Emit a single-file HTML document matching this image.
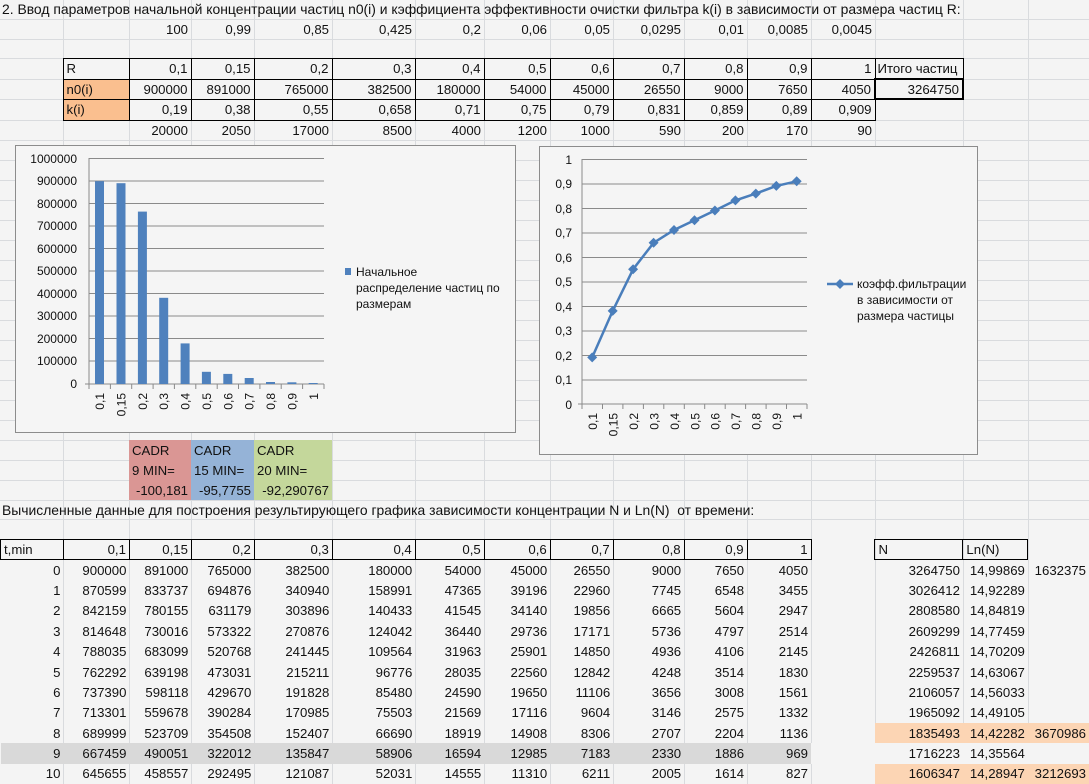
<!DOCTYPE html>
<html><head><meta charset="utf-8"><style>
*{margin:0;padding:0;box-sizing:border-box}
body{width:1089px;height:784px;overflow:hidden;background:#f4f4f4;position:relative;font-family:"Liberation Sans",sans-serif;font-size:13.2px;color:#111}
.v{position:absolute;top:0;width:1px;height:784px;background:#d9dbde}
.h{position:absolute;left:0;width:1089px;height:1px;background:#d9dbde}
table{position:absolute;left:0;border-collapse:collapse;table-layout:fixed}
td{padding:0 3px;text-align:right;white-space:nowrap;overflow:visible;font-size:13.2px}
td.l{text-align:left}
.b{border:1px solid #000}
.B{border:2px solid #000}
.o{background:#fabf8f}
.p{background:#fcd5b4}
.g{background:#d9d9d9}
.t{position:absolute;left:2px;white-space:nowrap;font-size:13.2px}
</style></head><body>
<div class="v" style="left:63px"></div><div class="v" style="left:129px"></div><div class="v" style="left:191px"></div><div class="v" style="left:254px"></div><div class="v" style="left:332px"></div><div class="v" style="left:415px"></div><div class="v" style="left:484px"></div><div class="v" style="left:550px"></div><div class="v" style="left:613px"></div><div class="v" style="left:684px"></div><div class="v" style="left:747px"></div><div class="v" style="left:811px"></div><div class="v" style="left:875px"></div><div class="v" style="left:963px"></div><div class="v" style="left:1028px"></div>
<div class="h" style="top:19px"></div><div class="h" style="top:39px"></div><div class="h" style="top:58px"></div><div class="h" style="top:79px"></div><div class="h" style="top:99px"></div><div class="h" style="top:120px"></div><div class="h" style="top:140px"></div>
<div class="h" style="top:160px"></div><div class="h" style="top:180px"></div><div class="h" style="top:200px"></div><div class="h" style="top:220px"></div><div class="h" style="top:240px"></div><div class="h" style="top:260px"></div><div class="h" style="top:280px"></div><div class="h" style="top:300px"></div><div class="h" style="top:320px"></div><div class="h" style="top:340px"></div><div class="h" style="top:360px"></div><div class="h" style="top:380px"></div><div class="h" style="top:400px"></div><div class="h" style="top:420px"></div><div class="h" style="top:440px"></div><div class="h" style="top:460px"></div><div class="h" style="top:480px"></div><div class="h" style="top:500px"></div><div class="h" style="top:519px"></div>

<div class="t" style="top:1px;font-size:13.9px">2. Ввод параметров начальной концентрации частиц n0(i) и кэффициента эффективности очистки фильтра k(i) в зависимости от размера частиц R:</div>

<table style="top:19px">
<colgroup><col style="width:63px"><col style="width:66px"><col style="width:62px"><col style="width:63px"><col style="width:78px"><col style="width:83px"><col style="width:69px"><col style="width:66px"><col style="width:63px"><col style="width:71px"><col style="width:63px"><col style="width:64px"><col style="width:64px"><col style="width:88px"></colgroup>
<tr style="height:20px"><td></td><td></td><td>100</td><td>0,99</td><td>0,85</td><td>0,425</td><td>0,2</td><td>0,06</td><td>0,05</td><td>0,0295</td><td>0,01</td><td>0,0085</td><td>0,0045</td><td></td></tr>
<tr style="height:19px"><td colspan="14"></td></tr>
<tr style="height:21px"><td></td><td class="b l">R</td><td class="b">0,1</td><td class="b">0,15</td><td class="b">0,2</td><td class="b">0,3</td><td class="b">0,4</td><td class="b">0,5</td><td class="b">0,6</td><td class="b">0,7</td><td class="b">0,8</td><td class="b">0,9</td><td class="b">1</td><td class="b l" style="padding-left:2px">Итого частиц</td></tr>
<tr style="height:20px"><td></td><td class="b l o">n0(i)</td><td class="b">900000</td><td class="b">891000</td><td class="b">765000</td><td class="b">382500</td><td class="b">180000</td><td class="b">54000</td><td class="b">45000</td><td class="b">26550</td><td class="b">9000</td><td class="b">7650</td><td class="b">4050</td><td class="B">3264750</td></tr>
<tr style="height:21px"><td></td><td class="b l o">k(i)</td><td class="b">0,19</td><td class="b">0,38</td><td class="b">0,55</td><td class="b">0,658</td><td class="b">0,71</td><td class="b">0,75</td><td class="b">0,79</td><td class="b">0,831</td><td class="b">0,859</td><td class="b">0,89</td><td class="b">0,909</td><td></td></tr>
<tr style="height:20px"><td></td><td></td><td>20000</td><td>2050</td><td>17000</td><td>8500</td><td>4000</td><td>1200</td><td>1000</td><td>590</td><td>200</td><td>170</td><td>90</td><td></td></tr>
</table>

<div style="position:absolute;left:129px;top:440px;width:62px;height:60px;background:#da9694"></div>
<div style="position:absolute;left:191px;top:440px;width:63px;height:60px;background:#95b3d7"></div>
<div style="position:absolute;left:254px;top:440px;width:78px;height:60px;background:#c4d79b"></div>
<div class="t" style="left:132px;top:443px">CADR</div><div class="t" style="left:132px;top:463px">9 MIN=</div><div class="t" style="left:132px;top:483px;width:56px;text-align:right">-100,181</div>
<div class="t" style="left:194px;top:443px">CADR</div><div class="t" style="left:194px;top:463px">15 MIN=</div><div class="t" style="left:194px;top:483px;width:57px;text-align:right">-95,7755</div>
<div class="t" style="left:257px;top:443px">CADR</div><div class="t" style="left:257px;top:463px">20 MIN=</div><div class="t" style="left:257px;top:483px;width:72px;text-align:right">-92,290767</div>

<div class="t" style="top:502px;font-size:13.9px">Вычисленные данные для построения результирующего графика зависимости концентрации N и Ln(N)&nbsp; от времени:</div>

<table style="top:539px">
<colgroup><col style="width:63px"><col style="width:66px"><col style="width:62px"><col style="width:63px"><col style="width:78px"><col style="width:83px"><col style="width:69px"><col style="width:66px"><col style="width:63px"><col style="width:71px"><col style="width:63px"><col style="width:64px"><col style="width:64px"><col style="width:88px"><col style="width:65px"><col style="width:61px"></colgroup>
<tr style="height:20.4px"><td class="b l">t,min</td><td class="b">0,1</td><td class="b">0,15</td><td class="b">0,2</td><td class="b">0,3</td><td class="b">0,4</td><td class="b">0,5</td><td class="b">0,6</td><td class="b">0,7</td><td class="b">0,8</td><td class="b">0,9</td><td class="b">1</td><td></td><td class="b l">N</td><td class="b l">Ln(N)</td><td></td></tr>
<tr style="height:20.4px"><td>0</td><td>900000</td><td>891000</td><td>765000</td><td>382500</td><td>180000</td><td>54000</td><td>45000</td><td>26550</td><td>9000</td><td>7650</td><td>4050</td><td></td><td>3264750</td><td>14,99869</td><td>1632375</td></tr>
<tr style="height:20.4px"><td>1</td><td>870599</td><td>833737</td><td>694876</td><td>340940</td><td>158991</td><td>47365</td><td>39196</td><td>22960</td><td>7745</td><td>6548</td><td>3455</td><td></td><td>3026412</td><td>14,92289</td><td></td></tr>
<tr style="height:20.4px"><td>2</td><td>842159</td><td>780155</td><td>631179</td><td>303896</td><td>140433</td><td>41545</td><td>34140</td><td>19856</td><td>6665</td><td>5604</td><td>2947</td><td></td><td>2808580</td><td>14,84819</td><td></td></tr>
<tr style="height:20.4px"><td>3</td><td>814648</td><td>730016</td><td>573322</td><td>270876</td><td>124042</td><td>36440</td><td>29736</td><td>17171</td><td>5736</td><td>4797</td><td>2514</td><td></td><td>2609299</td><td>14,77459</td><td></td></tr>
<tr style="height:20.4px"><td>4</td><td>788035</td><td>683099</td><td>520768</td><td>241445</td><td>109564</td><td>31963</td><td>25901</td><td>14850</td><td>4936</td><td>4106</td><td>2145</td><td></td><td>2426811</td><td>14,70209</td><td></td></tr>
<tr style="height:20.4px"><td>5</td><td>762292</td><td>639198</td><td>473031</td><td>215211</td><td>96776</td><td>28035</td><td>22560</td><td>12842</td><td>4248</td><td>3514</td><td>1830</td><td></td><td>2259537</td><td>14,63067</td><td></td></tr>
<tr style="height:20.4px"><td>6</td><td>737390</td><td>598118</td><td>429670</td><td>191828</td><td>85480</td><td>24590</td><td>19650</td><td>11106</td><td>3656</td><td>3008</td><td>1561</td><td></td><td>2106057</td><td>14,56033</td><td></td></tr>
<tr style="height:20.4px"><td>7</td><td>713301</td><td>559678</td><td>390284</td><td>170985</td><td>75503</td><td>21569</td><td>17116</td><td>9604</td><td>3146</td><td>2575</td><td>1332</td><td></td><td>1965092</td><td>14,49105</td><td></td></tr>
<tr style="height:20.4px"><td>8</td><td>689999</td><td>523709</td><td>354508</td><td>152407</td><td>66690</td><td>18919</td><td>14908</td><td>8306</td><td>2707</td><td>2204</td><td>1136</td><td></td><td class="p">1835493</td><td class="p">14,42282</td><td class="p">3670986</td></tr>
<tr style="height:20.4px" class="g"><td>9</td><td>667459</td><td>490051</td><td>322012</td><td>135847</td><td>58906</td><td>16594</td><td>12985</td><td>7183</td><td>2330</td><td>1886</td><td>969</td><td style="background:#f4f4f4"></td><td style="background:#f4f4f4">1716223</td><td style="background:#f4f4f4">14,35564</td><td style="background:#f4f4f4"></td></tr>
<tr style="height:20.4px"><td>10</td><td>645655</td><td>458557</td><td>292495</td><td>121087</td><td>52031</td><td>14555</td><td>11310</td><td>6211</td><td>2005</td><td>1614</td><td>827</td><td></td><td class="p">1606347</td><td class="p">14,28947</td><td class="p">3212693</td></tr>
</table>

<svg width="1089" height="784" style="position:absolute;left:0;top:0" font-family="Liberation Sans, sans-serif" font-size="12" fill="#111">
<rect x="15.5" y="145.5" width="500" height="287" fill="#f5f5f5" stroke="#8c8c8c"/>
<g stroke="#8a8a8a" stroke-width="1">
<line x1="89" y1="158.5" x2="324" y2="158.5"/><line x1="89" y1="181" x2="324" y2="181"/><line x1="89" y1="203.5" x2="324" y2="203.5"/><line x1="89" y1="226" x2="324" y2="226"/><line x1="89" y1="248.5" x2="324" y2="248.5"/><line x1="89" y1="271" x2="324" y2="271"/><line x1="89" y1="293.5" x2="324" y2="293.5"/><line x1="89" y1="316" x2="324" y2="316"/><line x1="89" y1="338.5" x2="324" y2="338.5"/><line x1="89" y1="361" x2="324" y2="361"/><line x1="85" y1="384" x2="324" y2="384"/><line x1="89" y1="158" x2="89" y2="389"/>
<line x1="110.4" y1="384" x2="110.4" y2="389"/><line x1="131.7" y1="384" x2="131.7" y2="389"/><line x1="153.1" y1="384" x2="153.1" y2="389"/><line x1="174.4" y1="384" x2="174.4" y2="389"/><line x1="195.8" y1="384" x2="195.8" y2="389"/><line x1="217.2" y1="384" x2="217.2" y2="389"/><line x1="238.5" y1="384" x2="238.5" y2="389"/><line x1="259.9" y1="384" x2="259.9" y2="389"/><line x1="281.2" y1="384" x2="281.2" y2="389"/><line x1="302.6" y1="384" x2="302.6" y2="389"/><line x1="324" y1="384" x2="324" y2="389"/>
</g>
<g text-anchor="end">
<text x="77" y="163">1000000</text><text x="77" y="185">900000</text><text x="77" y="208">800000</text><text x="77" y="230">700000</text><text x="77" y="253">600000</text><text x="77" y="275">500000</text><text x="77" y="298">400000</text><text x="77" y="320">300000</text><text x="77" y="343">200000</text><text x="77" y="365">100000</text><text x="77" y="388">0</text>
</g>
<g fill="#4f81bd">
<rect x="95" y="181.2" width="9" height="202.8"/><rect x="116.5" y="183.2" width="9" height="200.8"/><rect x="137.9" y="211.6" width="9" height="172.4"/><rect x="159.2" y="297.8" width="9" height="86.2"/><rect x="180.6" y="343.4" width="9" height="40.6"/><rect x="201.9" y="371.8" width="9" height="12.2"/><rect x="223.3" y="373.9" width="9" height="10.1"/><rect x="244.7" y="378" width="9" height="6"/><rect x="266" y="382" width="9" height="2"/><rect x="287.4" y="382.3" width="9" height="1.7"/><rect x="308.7" y="383" width="9" height="1"/>
</g>
<g text-anchor="end">
<text transform="translate(104,393) rotate(-90)">0,1</text><text transform="translate(125.5,393) rotate(-90)">0,15</text><text transform="translate(146.9,393) rotate(-90)">0,2</text><text transform="translate(168.2,393) rotate(-90)">0,3</text><text transform="translate(189.6,393) rotate(-90)">0,4</text><text transform="translate(211,393) rotate(-90)">0,5</text><text transform="translate(232.3,393) rotate(-90)">0,6</text><text transform="translate(253.7,393) rotate(-90)">0,7</text><text transform="translate(275,393) rotate(-90)">0,8</text><text transform="translate(296.4,393) rotate(-90)">0,9</text><text transform="translate(317.8,393) rotate(-90)">1</text>
</g>
<rect x="345" y="268" width="6" height="7" fill="#4f81bd"/>
<text x="356" y="276">Начальное</text><text x="356" y="292">распределение частиц по</text><text x="356" y="308">размерам</text>

<rect x="539.5" y="146.5" width="438" height="308" fill="#f5f5f5" stroke="#8c8c8c"/>
<g stroke="#8a8a8a">
<line x1="582" y1="159.5" x2="807" y2="159.5"/><line x1="582" y1="184" x2="807" y2="184"/><line x1="582" y1="208.5" x2="807" y2="208.5"/><line x1="582" y1="233" x2="807" y2="233"/><line x1="582" y1="257.5" x2="807" y2="257.5"/><line x1="582" y1="282" x2="807" y2="282"/><line x1="582" y1="306.5" x2="807" y2="306.5"/><line x1="582" y1="331" x2="807" y2="331"/><line x1="582" y1="355.5" x2="807" y2="355.5"/><line x1="582" y1="380" x2="807" y2="380"/><line x1="578" y1="404" x2="807" y2="404"/><line x1="582" y1="159" x2="582" y2="409"/>
<line x1="602.5" y1="404" x2="602.5" y2="409"/><line x1="622.9" y1="404" x2="622.9" y2="409"/><line x1="643.4" y1="404" x2="643.4" y2="409"/><line x1="663.8" y1="404" x2="663.8" y2="409"/><line x1="684.3" y1="404" x2="684.3" y2="409"/><line x1="704.7" y1="404" x2="704.7" y2="409"/><line x1="725.2" y1="404" x2="725.2" y2="409"/><line x1="745.6" y1="404" x2="745.6" y2="409"/><line x1="766.1" y1="404" x2="766.1" y2="409"/><line x1="786.5" y1="404" x2="786.5" y2="409"/><line x1="807" y1="404" x2="807" y2="409"/>
</g>
<g text-anchor="end">
<text x="572" y="164">1</text><text x="572" y="188">0,9</text><text x="572" y="213">0,8</text><text x="572" y="237">0,7</text><text x="572" y="262">0,6</text><text x="572" y="286">0,5</text><text x="572" y="311">0,4</text><text x="572" y="335">0,3</text><text x="572" y="360">0,2</text><text x="572" y="384">0,1</text><text x="572" y="409">0</text>
</g>
<polyline fill="none" stroke="#4a7ebb" stroke-width="2.5" points="592.2,357.4 612.7,310.9 633.1,269.3 653.6,242.8 674,230 694.5,220.2 714.9,210.5 735.4,200.4 755.8,193.6 776.3,185.9 796.7,181.3"/>
<g fill="#4a7ebb">
<path d="M592.2 352.4l5 5-5 5-5-5z"/><path d="M612.7 305.9l5 5-5 5-5-5z"/><path d="M633.1 264.3l5 5-5 5-5-5z"/><path d="M653.6 237.8l5 5-5 5-5-5z"/><path d="M674 225l5 5-5 5-5-5z"/><path d="M694.5 215.2l5 5-5 5-5-5z"/><path d="M714.9 205.5l5 5-5 5-5-5z"/><path d="M735.4 195.4l5 5-5 5-5-5z"/><path d="M755.8 188.6l5 5-5 5-5-5z"/><path d="M776.3 180.9l5 5-5 5-5-5z"/><path d="M796.7 176.3l5 5-5 5-5-5z"/>
<path d="M840 279l5 5-5 5-5-5z"/>
</g>
<g text-anchor="end">
<text transform="translate(597,413) rotate(-90)">0,1</text><text transform="translate(617.5,413) rotate(-90)">0,15</text><text transform="translate(637.9,413) rotate(-90)">0,2</text><text transform="translate(658.4,413) rotate(-90)">0,3</text><text transform="translate(678.8,413) rotate(-90)">0,4</text><text transform="translate(699.3,413) rotate(-90)">0,5</text><text transform="translate(719.7,413) rotate(-90)">0,6</text><text transform="translate(740.2,413) rotate(-90)">0,7</text><text transform="translate(760.6,413) rotate(-90)">0,8</text><text transform="translate(781.1,413) rotate(-90)">0,9</text><text transform="translate(801.5,413) rotate(-90)">1</text>
</g>
<line x1="827" y1="284" x2="853" y2="284" stroke="#4a7ebb" stroke-width="2.5"/>
<text x="857" y="288">коэфф.фильтрации</text><text x="857" y="304">в зависимости от</text><text x="857" y="320">размера частицы</text>
</svg>
</body></html>
